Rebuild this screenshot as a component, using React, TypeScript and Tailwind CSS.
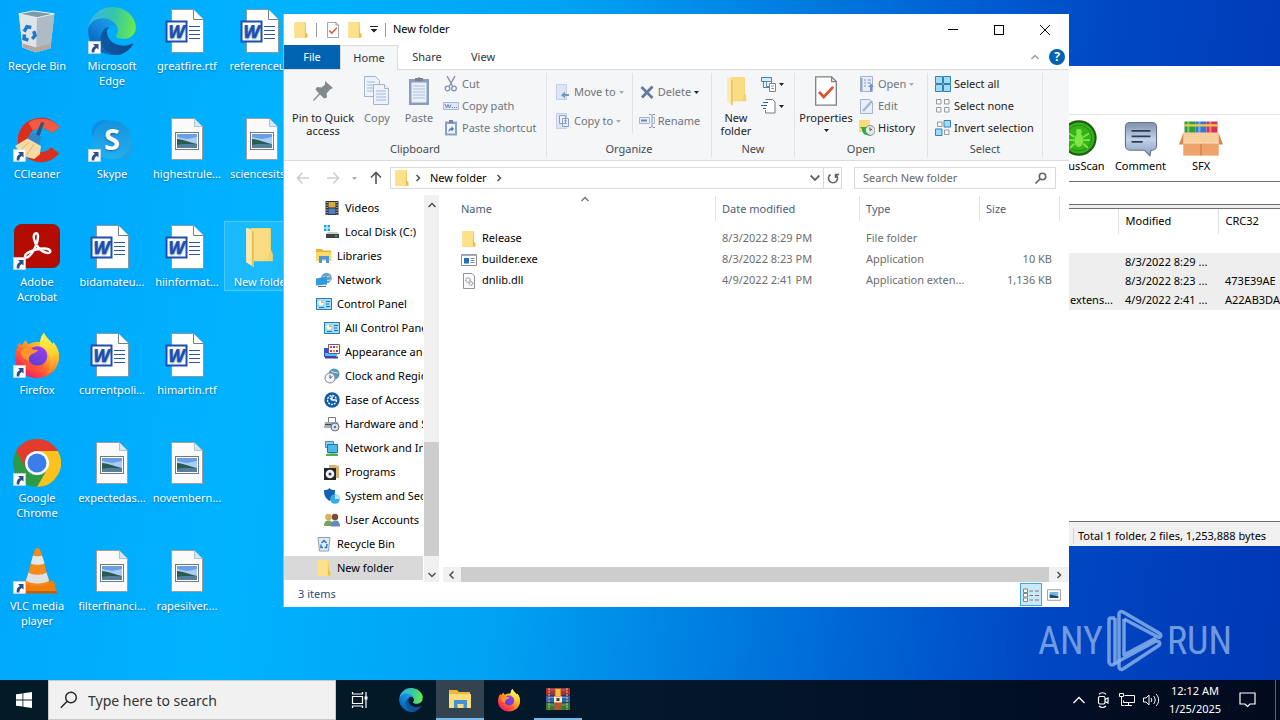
import React from "react";
import type { ReactNode } from "react";

/* ---------- desktop icons ---------- */

const Shortcut = () => (
  <g>
    <rect x="0.5" y="34.500" width="12" height="12" fill="#fff" stroke="#d5dde5" strokeWidth="0.6" />
    <path d="M5 37h5.500v5.500L8.700 40.900C6.800 42 6.200 43.400 6.400 45.500H3.800C3.200 42.400 4.500 40 6.900 38.900z" fill="#2a4f8f" />
  </g>
);

const Art = ({ children }: { children: ReactNode }) => (
  <svg viewBox="0 0 48 48" className="size-12" aria-hidden="true">
    {children}
  </svg>
);

const RecycleBin = () => (
  <Art>
    <g transform="translate(1 2) scale(0.960)">
      <path d="M5 5 20 2l22 3-4 36-15 4-14-5z" fill="#d3dbe2" />
      <path d="M5 5 24 9l-1 36-14-5z" fill="#dfe4e8" />
      <path d="M24 9 42 5l-4 36-15 4z" fill="#aebac4" />
      <path d="M9 36 23 40l15-4-.6 5L23 45 9.500 40z" fill="#b5a79d" />
      <path d="M5 5 20 2l22 3-18 4z" fill="#7d98a9" stroke="#e9f2f7" strokeWidth="1" />
      <g fill="none" stroke="#1a78cf" strokeWidth="3.600">
        <path d="M10.500 23.500 13.500 18.500l4.500.8" />
        <path d="M20.500 23 22 27.500l-3 3.500" />
        <path d="M15 32.500 10.500 31l.3-4.500" />
      </g>
    </g>
  </Art>
);

const edgeShapes = (
  <>
    <defs>
      <linearGradient id="edgeA" x1="60" y1="180" x2="240" y2="180" gradientUnits="userSpaceOnUse">
        <stop stopColor="#0c59a4" />
        <stop offset="1" stopColor="#114a8b" />
      </linearGradient>
      <linearGradient id="edgeB" x1="150" y1="90" x2="40" y2="220" gradientUnits="userSpaceOnUse">
        <stop stopColor="#1b9de2" />
        <stop offset="0.500" stopColor="#1383d8" />
        <stop offset="1" stopColor="#0762b8" />
      </linearGradient>
      <linearGradient id="edgeC" x1="10" y1="60" x2="250" y2="110" gradientUnits="userSpaceOnUse">
        <stop stopColor="#35b6e8" />
        <stop offset="0.500" stopColor="#36c5a8" />
        <stop offset="1" stopColor="#66eb4e" />
      </linearGradient>
    </defs>
    <path fill="url(#edgeA)" d="M235.680 195.460a93.730 93.730 0 0 1-10.540 4.710 101.870 101.870 0 0 1-35.900 6.460c-47.320 0-88.540-32.550-88.540-74.320A31.480 31.480 0 0 1 117.130 105c-42.800 1.800-53.800 46.400-53.800 72.530 0 73.880 68.090 81.370 82.760 81.370 7.910 0 19.840-2.300 27-4.560l1.310-.44a128.340 128.340 0 0 0 66.600-52.800 4 4 0 0 0-5.320-5.640z" />
    <path fill="url(#edgeB)" d="M105.730 241.420A79.200 79.200 0 0 1 83 220.080a80.720 80.720 0 0 1 29.530-120.420C115.660 98.190 121 95.530 128.100 95.660a32.350 32.350 0 0 1 25.680 13 31.880 31.880 0 0 1 6.360 18.660c0-.21 24.460-79.600-80-79.600-43.900 0-80 41.660-80 78.210a130.150 130.150 0 0 0 12.110 56 128 128 0 0 0 156.380 67.110 75.550 75.550 0 0 1-62.780-8z" />
    <path fill="url(#edgeC)" d="M152.330 148.860c-.81 1.050-3.300 2.500-3.300 5.660 0 2.610 1.700 5.120 4.720 7.230 14.380 10 41.490 8.680 41.560 8.680a59.560 59.560 0 0 0 30.270-8.350A61.380 61.380 0 0 0 256 109.190c.26-22.410-8-37.310-11.340-43.910C223.460 23.840 177.720 0 128 0A128 128 0 0 0 0 126.200c.48-36.540 36.800-66.050 80-66.050 3.500 0 23.460.34 42 10.070 16.340 8.580 24.900 18.940 30.850 29.210 6.180 10.670 7.280 24.150 7.280 29.520s-2.740 13.330-7.800 19.910z" />
  </>
);

const EdgeIcon = () => (
  <Art>
    <g transform="scale(0.187)">{edgeShapes}</g>
    <Shortcut />
  </Art>
);

const firefoxShapes = (
  <>
    <defs>
      <linearGradient id="ffA" x1="38" y1="6" x2="8" y2="44" gradientUnits="userSpaceOnUse">
        <stop stopColor="#fff44f" />
        <stop offset="0.350" stopColor="#ffb32a" />
        <stop offset="0.600" stopColor="#ff6a2c" />
        <stop offset="0.850" stopColor="#fb2f55" />
        <stop offset="1" stopColor="#e31587" />
      </linearGradient>
      <linearGradient id="ffB" x1="30" y1="14" x2="18" y2="34" gradientUnits="userSpaceOnUse">
        <stop stopColor="#a33df0" />
        <stop offset="1" stopColor="#5a3fd0" />
      </linearGradient>
      <linearGradient id="ffC" x1="30" y1="2" x2="42" y2="38" gradientUnits="userSpaceOnUse">
        <stop stopColor="#fff65a" />
        <stop offset="0.600" stopColor="#ffd22e" />
        <stop offset="1" stopColor="#ff8b2b" />
      </linearGradient>
    </defs>
    <path fill="url(#ffA)" d="M6.500 11.500c.8 1 1.200 2 1.500 3.200 1.500-1.800 3-3 4.300-5.700 1 1.500 1.800 3.300 3.700 4.300 3.500-2 7-2.600 11-2 .5-4 1.800-7.300 4-9.300C33 7 37 9 39.500 13c.7-.3.8-1 .8-2 4 4.700 6 10 5.700 15.500C45.500 38.500 36 47 24 47S1.800 38 2 25.500C2 20 4 16 6.500 11.500z" />
    <path fill="url(#ffC)" d="M27 11.300c.5-4 1.800-7.300 4-9.300 2 5 6 7 8.500 11 .7-.3.8-1 .8-2 4 4.700 6 10 5.700 15.500C45.700 34 40 41 33 43.500 38 38 39 31 36.500 25c-1.500-4.500-5-7-9.500-8z" />
    <circle cx="24.500" cy="25" r="9.800" fill="url(#ffB)" />
    <path d="M7.500 20c4-3.700 8-3.500 11.500-2 1.700.8 3.300.8 6 1-1 2.800-4.800 3.300-6.800 4.500-2 1.600-2.800 3.800-2.200 6.500-4.500-1.500-8.500-5-8.500-10z" fill="#ff9528" />
    <path d="M12 29c3 7 12 9.500 19 5-3 7.500-16 8.500-21 0z" fill="#ff5138" opacity="0.700" />
  </>
);

const FirefoxIcon = () => (
  <Art>
    {firefoxShapes}
    <Shortcut />
  </Art>
);

const ChromeIcon = () => (
  <Art>
    <circle cx="24" cy="24" r="24" fill="#2c9a48" />
    <path d="M24 24 3.200 12A24 24 0 0 1 44.800 12z" fill="#e33b2e" />
    <path d="M24 12h20.800A24 24 0 0 1 24 48l10.400-18z" fill="#fcc31e" />
    <path d="M3.200 12 13.600 30 24 12z" fill="#e33b2e" />
    <circle cx="24" cy="24" r="12" fill="#fff" />
    <circle cx="24" cy="24" r="9.500" fill="#3b7de9" />
    <Shortcut />
  </Art>
);

const CCleanerIcon = () => (
  <Art>
    <g transform="translate(2 3) scale(0.960 0.930)">
      <path d="M46.500 10A24 24 0 1 0 46 38l-8.500-6.500a13 13 0 1 1 .5-15z" fill="#d8301f" />
      <path d="M46.500 10A24 24 0 0 0 14 5l5 9a13 13 0 0 1 19 2.500z" fill="#ee5a42" />
      <path d="m27.500 4 3 1.500-7 19-4-1.500z" fill="#27577f" />
      <path d="m13 21 6-5 8 4-1 8-6 3z" fill="#2f86c9" />
      <path d="M0 30 13 22l14 8-1 9-6 5-8-2-6-5z" fill="#f7dba5" />
      <path d="m7 33 8-7m-3 14 8-12" stroke="#dcae6a" fill="none" />
    </g>
    <Shortcut />
  </Art>
);

const SkypeIcon = () => (
  <Art>
    <defs>
      <linearGradient id="skype" x1="0" y1="0" x2="0" y2="1">
        <stop stopColor="#1592df" />
        <stop offset="1" stopColor="#23b1ee" />
      </linearGradient>
    </defs>
    <circle cx="16" cy="17" r="12" fill="#0d8fe0" />
    <circle cx="33" cy="33" r="12" fill="#1fa0e8" />
    <circle cx="24" cy="25" r="19.500" fill="url(#skype)" />
    <text x="24" y="35" textAnchor="middle" fill="#fff" fontSize="29" fontWeight="700" fontFamily="Noto Sans, sans-serif">S</text>
    <Shortcut />
  </Art>
);

const AcrobatIcon = () => (
  <Art>
    <rect x="1.500" y="1.500" width="45" height="43" rx="7" fill="#b30b00" stroke="#8b1a12" />
    <path d="M22.500 10.500c3-1.500 3 4 1.500 9-2 6.500-6.500 14-10 15-3.500.8-2.500-3.500 3-5.800 6-2.500 12-3.700 16.500-3 5.500 1 4.500 5 .5 4.200C28 29 22 22 21 16c-.5-3 0-5 1.500-5.500z" fill="none" stroke="#fff" strokeWidth="2.400" />
    <Shortcut />
  </Art>
);

const VlcIcon = () => (
  <Art>
    <path d="M9 34h32l3 12H6z" fill="#f07f0e" />
    <path d="M5.500 44h38l.6 2.500H5z" fill="#c85f04" />
    <path d="M24.500 1c2 0 2.500 1 3 3l9 31c-2 5-22 5-24 0l9-31c.5-2 1-3 3-3z" fill="#f68a1b" />
    <path d="m20 8.500-2.300 8c3 1.800 10.500 1.800 14 0L29 8.500c-2 1-7.500 1-9 0z" fill="#e4e7e9" />
    <path d="m15.500 25.500-2.500 8c4 4 19 4 23 0l-2.500-8c-4 3-14 3-18 0z" fill="#dde1e4" />
    <Shortcut />
  </Art>
);

const WordDoc = () => (
  <Art>
    <path d="M8.500 2.500h22l10 10v33h-32z" fill="#fff" stroke="#8796a8" />
    <path d="M30.500 2.500v10h10" fill="#fff" stroke="#6f7f90" />
    <path d="M26 19.500h11M26 23.500h11M26 27.500h11M26 31.500h11" stroke="#2b56a8" strokeWidth="1.200" />
    <rect x="3.500" y="14.500" width="20" height="20" fill="#fff" stroke="#1f4fae" strokeWidth="2" />
    <text x="13.500" y="31" textAnchor="middle" fill="#1f4fae" fontSize="18" fontWeight="800" fontStyle="italic" fontFamily="Noto Sans, sans-serif">W</text>
  </Art>
);

const PictureDoc = () => (
  <Art>
    <path d="M8.500 3.500h23l8 8v33h-31z" fill="#fbfafa" stroke="#a39d99" />
    <path d="M31.500 3.500v8h8z" fill="#cfe9fa" stroke="#9ab0bd" strokeWidth="0.700" />
    <rect x="12.500" y="17.500" width="23" height="17" fill="#fff" stroke="#6f7a85" />
    <path d="M14 19h20v14H14z" fill="#a9cdf5" />
    <path d="M14 19h20v3L24 24l-10-2z" fill="#6a9fe6" />
    <path d="M14 24c4 0 12 3 20 5v4H14z" fill="#2a5a50" />
    <path d="M14 30c8-2 14 0 20-1v4H14z" fill="#54809b" />
  </Art>
);

const OpenFolder = ({ className }: { className: string }) => (
  <svg viewBox="0 0 32 44" className={className} aria-hidden="true">
    <path d="M8 2h21v23l2 4v8H8z" fill="#f5d36c" />
    <path d="M10 3h18v24l-3 9H10z" fill="#fbdc83" />
    <path d="M3 2c3 0 5 1 8 4v37L3 38z" fill="#fde9ab" />
    <path d="M11 6v37l-2-1.200V5z" fill="#e5bb52" />
  </svg>
);

const BigFolder = () => (
  <span className="flex size-12 items-center pl-[5px]">
    <OpenFolder className="h-[42px] w-[31px]" />
  </span>
);

const desktopItems: { label: string; icon: ReactNode; selected?: boolean }[][] = [
  [
    { label: "Recycle Bin", icon: <RecycleBin /> },
    { label: "CCleaner", icon: <CCleanerIcon /> },
    { label: "Adobe Acrobat", icon: <AcrobatIcon /> },
    { label: "Firefox", icon: <FirefoxIcon /> },
    { label: "Google Chrome", icon: <ChromeIcon /> },
    { label: "VLC media player", icon: <VlcIcon /> },
  ],
  [
    { label: "Microsoft Edge", icon: <EdgeIcon /> },
    { label: "Skype", icon: <SkypeIcon /> },
    { label: "bidamateu...", icon: <WordDoc /> },
    { label: "currentpoli...", icon: <WordDoc /> },
    { label: "expectedas...", icon: <PictureDoc /> },
    { label: "filterfinanci...", icon: <PictureDoc /> },
  ],
  [
    { label: "greatfire.rtf", icon: <WordDoc /> },
    { label: "highestrule...", icon: <PictureDoc /> },
    { label: "hiinformat...", icon: <WordDoc /> },
    { label: "himartin.rtf", icon: <WordDoc /> },
    { label: "novembern...", icon: <PictureDoc /> },
    { label: "rapesilver....", icon: <PictureDoc /> },
  ],
  [
    { label: "referenceu...", icon: <WordDoc /> },
    { label: "sciencesits...", icon: <PictureDoc /> },
    { label: "New folder", icon: <BigFolder />, selected: true },
  ],
];

/* ---------- small icons ---------- */

const Ic = ({ children, className = "size-4" }: { children: ReactNode; className?: string }) => (
  <svg viewBox="0 0 16 16" className={`shrink-0 ${className}`} aria-hidden="true" fill="none">
    {children}
  </svg>
);

const Folder = () => (
  <Ic>
    <path d="M1.500 0H13v11l1.500 1v4h-13z" fill="#f9d772" />
    <path d="M1.500 0h10v16h-10z" fill="#fde08a" />
    <path d="M13 .5V11l1.300 1v3L12 15.500V12z" fill="#e8bd55" />
  </Ic>
);

const CheckDoc = ({ className = "size-4" }: { className?: string }) => (
  <Ic className={className}>
    <path d="M2.500.5h8.500l2.500 2.500v12.500h-11z" fill="#fff" stroke="#7d8288" strokeWidth="0.700" />
    <path d="M11 .5V3h2.500" stroke="#7d8288" strokeWidth="0.700" />
    <path d="m4.300 8.500 2.500 2.700 5-5.400" stroke="#e0532f" strokeWidth="1.500" />
  </Ic>
);

const Down = ({ muted = false }: { muted?: boolean }) => (
  <svg viewBox="0 0 5 3" className={muted ? "h-[3px] w-[5px] shrink-0 fill-[#a9adb3]" : "h-[3px] w-[5px] shrink-0 fill-[#222]"} aria-hidden="true">
    <path d="M0 0h5L2.500 3z" />
  </svg>
);

const Monitor = () => (
  <Ic>
    <rect x="0.500" y="2.500" width="15" height="11" fill="#9fdcf7" stroke="#2b7fb5" />
    <circle cx="5" cy="7" r="2.500" fill="#fff" />
    <path d="M5 7V4.500A2.500 2.500 0 0 1 7.500 7z" fill="#f2b72f" />
    <path d="M3 11.500h5M10 5.500h4M10 8h3M10 10.500h4" stroke="#1f6fb2" />
  </Ic>
);

const treeItems: { label: string; level: 1 | 2; icon: ReactNode; selected?: boolean }[] = [
  {
    label: "Videos", level: 2, icon: (
      <Ic><path d="M1.500 1h13v14h-13z" fill="#313338" /><path d="M4.500 2h7v5.500h-7z" fill="#d9a83f" /><path d="M4.500 8.500h7V14h-7z" fill="#4a81c9" /><path d="M3 2v13M13 2v13" stroke="#fff" strokeWidth="1" strokeDasharray="1 1.500" /></Ic>
    ),
  },
  {
    label: "Local Disk (C:)", level: 2, icon: (
      <Ic><path d="M0 1h2.500v2.500H0zM3.500 1H6v2.500H3.500zM0 4.500h2.500V7H0zM3.500 4.500H6V7H3.500z" fill="#19a7e8" /><path d="M2 10 4 8h9l2 2z" fill="#c7cbd0" /><path d="M2 10h13v4H2z" fill="#3d4249" /><path d="M11 12h2" stroke="#51e36b" strokeWidth="1.200" /></Ic>
    ),
  },
  {
    label: "Libraries", level: 1, icon: (
      <Ic><path d="M0 1h6l1 1.500h8V13H0z" fill="#e9b13a" /><path d="M0 4h15.500v9H0z" fill="#fcd968" /><path d="M3 15V8h10v7h-3v-3.500H6V15z" fill="#4a96d8" /></Ic>
    ),
  },
  {
    label: "Network", level: 1, icon: (
      <Ic><circle cx="10.500" cy="6" r="5.300" fill="#6f9fbf" /><path d="M7 4c2 2 4 1 7 0M6 8c3 1 5 1 9 0" stroke="#cfe3ee" /><path d="M0 6.500 11 4.500v8L0 13.500z" fill="#2d9bdd" /><path d="M2 14.500h8" stroke="#5c6c78" /></Ic>
    ),
  },
  { label: "Control Panel", level: 1, icon: <Monitor /> },
  { label: "All Control Panel Items", level: 2, icon: <Monitor /> },
  {
    label: "Appearance and Personalization", level: 2, icon: (
      <Ic><path d="M0 4h12v9H0z" fill="#2c56c9" /><path d="M1 9h12v3H1z" fill="#47c0f2" /><path d="M4.500.5h11v9h-11z" fill="#fff" stroke="#73508c" /><path d="M6 2h2v2H6zM6 6h2v2H6z" fill="#e33" /><path d="M9 2h2v2H9zM12 6h2v2h-2z" fill="#7b36c9" /><path d="M12 2h2v2h-2zM9 6h2v2H9z" fill="#e89a1d" /><path d="M1 13.500h13" stroke="#5236a8" strokeWidth="2" /></Ic>
    ),
  },
  {
    label: "Clock and Region", level: 2, icon: (
      <Ic><circle cx="10" cy="6" r="5.500" fill="#5a96b8" /><path d="M7 3c2 2 5 1 7 2" stroke="#d7edf5" /><circle cx="6" cy="10" r="5" fill="#f3f5f7" stroke="#84898f" /><path d="M6 7v3.300l2.500-2" stroke="#555" /></Ic>
    ),
  },
  {
    label: "Ease of Access", level: 2, icon: (
      <Ic><circle cx="8" cy="8" r="7.700" fill="#0f5ea8" /><circle cx="8" cy="8" r="4.500" stroke="#fff" strokeWidth="1.300" strokeDasharray="2 1" /><path d="M8 4v4h4M6 6l2 2" stroke="#fff" strokeWidth="1.300" /></Ic>
    ),
  },
  {
    label: "Hardware and Sound", level: 2, icon: (
      <Ic><path d="M4.500 1.500h7v5h-7z" fill="#fff" stroke="#777" /><path d="M1 6h13l1 6H0z" fill="#a5adb4" /><path d="M1 8.500h7" stroke="#3e474f" /><circle cx="11" cy="11" r="4" fill="#d8e3ee" stroke="#65717c" /><circle cx="11" cy="11" r="1.200" fill="#4b7ba8" /></Ic>
    ),
  },
  {
    label: "Network and Internet", level: 2, icon: (
      <Ic><path d="M1.500 1.500h8v6h-8z" fill="#8fd0f0" stroke="#3d94c4" /><path d="M3.500 4.500h10v8h-10z" fill="#4db7f0" stroke="#1e75ab" /><path d="M2 14c4-1 9-1 12 0v2H2z" fill="#4fae4d" /></Ic>
    ),
  },
  {
    label: "Programs", level: 2, icon: (
      <Ic><path d="M5 1h6l4 1v12H5z" fill="#dab568" /><path d="M0 4h12v12H0z" fill="#24272b" /><circle cx="6" cy="10" r="4.300" fill="#f0f3f6" /><circle cx="6" cy="10" r="1.500" fill="#33383d" /></Ic>
    ),
  },
  {
    label: "System and Security", level: 2, icon: (
      <Ic><path d="M0 2c2 0 4 0 5.500-2C7 2 9 2 11 2c0 6-1 8-5.500 11C1 10 0 7 0 2z" fill="#1560b3" /><circle cx="11" cy="11" r="4.800" fill="#35aee8" /><path d="M11 11V6.200a4.800 4.800 0 0 1 4.700 4.800z" fill="#bde6f8" /></Ic>
    ),
  },
  {
    label: "User Accounts", level: 2, icon: (
      <Ic><circle cx="4.500" cy="5" r="3.300" fill="#d8b25c" /><path d="M0 14c0-4 2-5.500 4.500-5.500S9 10 9 14z" fill="#76a45a" /><circle cx="11" cy="5" r="3.200" fill="#7a4c35" /><path d="M7 14.500C7 10 9 8.500 11.500 8.500S16 10 16 14.500z" fill="#6489bd" /></Ic>
    ),
  },
  {
    label: "Recycle Bin", level: 1, icon: (
      <Ic><path d="m2 1.500 12 0-1.500 13.500h-9z" fill="#e4ebf0" stroke="#8f9fab" /><path d="m5.500 7 2.500-2.500L10.500 7M11 8l-.5 3.500H8.500M7 11.500H5L5 8.500" stroke="#2379c8" strokeWidth="1.500" /></Ic>
    ),
  },
  { label: "New folder", level: 1, icon: <Folder />, selected: true },
];

/* ---------- ribbon ---------- */

const Group = ({ label, children, className, pad = "pl-1" }: { label: string; children: ReactNode; className: string; pad?: string }) => (
  <section className={`my-[3px] flex shrink-0 flex-col border-r border-[#dfe2e6] ${className}`}>
    <div className={`flex h-[75px] items-start ${pad}`}>{children}</div>
    <div className="text-center leading-4 text-[#444a52]">{label}</div>
  </section>
);

const Big = ({ icon, label, className, muted = false }: { icon: ReactNode; label: ReactNode; className: string; muted?: boolean }) => (
  <button type="button" className={`flex flex-col items-center pt-[2px] leading-[13px] ${muted ? "text-[#6e747c]" : "text-[#222]"} ${className}`}>
    <span className="mb-1 flex h-8 items-center">{icon}</span>
    {label}
  </button>
);

const Small = ({ icon, label, muted = false, drop }: { icon: ReactNode; label: string; muted?: boolean; drop?: ReactNode }) => (
  <button type="button" className={`flex h-[22px] items-center gap-[3px] whitespace-nowrap ${muted ? "text-[#6e747c]" : "text-[#222]"}`}>
    {icon}
    <span>{label}</span>
    {drop}
  </button>
);

const Ribbon = () => (
  <div className="flex h-[92px] border-y border-[#dadbdc] bg-[#f5f6f7]">
    <Group label="Clipboard" className="w-[263px]" pad="pl-[3px]">
      <Big
        className="w-[72px]"
        label={<>Pin to Quick<br />access</>}
        icon={
          <svg viewBox="0 0 24 24" className="size-6" aria-hidden="true">
            <path d="m14 2 8 7-3 1.500-3.500 4 .5 4-3 1-4-4L3 22l-1-1 6-6.500-3.500-4L6 8l4.500.5 3.500-3z" fill="#828a8d" />
          </svg>
        }
      />
      <Big
        muted
        className="w-9"
        label="Copy"
        icon={
          <svg viewBox="0 0 28 30" className="h-[30px] w-7" aria-hidden="true" fill="#eef3fb" stroke="#a2b4d3">
            <path d="M1.500.5h11l4 4v16h-15z" />
            <path d="M4 6h8M4 9h9M4 12h9M4 15h9" />
            <path d="M10.500 8.500h11l4 4v16h-15z" />
            <path d="M21.500 8.500v4h4M13 15h10M13 18h10M13 21h10M13 24h10" />
          </svg>
        }
      />
      <Big
        muted
        className="ml-1 w-10"
        label="Paste"
        icon={
          <svg viewBox="0 0 22 30" className="h-[30px] w-[22px]" aria-hidden="true">
            <path d="M1 3h20v26H1z" fill="#8a9dbe" />
            <path d="M3.500 6.500h15v20h-15z" fill="#e9f0fa" />
            <path d="M5 10h12M5 13h12M5 16h12M5 19h12M5 22h12" stroke="#aebfda" />
            <path d="M7 5V2h2.500a2 2 0 0 1 3 0H15v3z" fill="#7a828d" />
          </svg>
        }
      />
      <div className="ml-1 flex flex-col">
        <Small muted label="Cut" icon={<Ic><path d="m4 0 5.500 10M12 0 6.500 10" stroke="#8d97a7" strokeWidth="1.500" /><circle cx="4.500" cy="12.500" r="2.300" stroke="#7f93b8" strokeWidth="1.300" /><circle cx="11" cy="12.500" r="2.300" stroke="#7f93b8" strokeWidth="1.300" /></Ic>} />
        <Small muted label="Copy path" icon={<Ic><path d="M.5 4.500h15v7H.5z" fill="#dfe8f6" stroke="#a9b9d5" /><path d="m2 6 1.500 4L5 6.500 6.500 10 8 6.500M9 9.500h1M11 9.500h1M13 9.500h1" stroke="#6c84b1" /></Ic>} />
        <Small muted label="Paste shortcut" icon={<Ic><path d="M2 1.500h12v14H2z" fill="#8ca2c8" /><path d="M4 4h8v9.500H4z" fill="#edf3fb" /><path d="M6 0h4v3H6z" fill="#7a8494" /><path d="M5.500 12c0-3 1.500-4 3-4V6l2.500 3-2.500 2.500V10c-1.200 0-1.500.8-3 2z" fill="#5379b6" /></Ic>} />
      </div>
    </Group>
    <Group label="Organize" className="w-[165px]" pad="pl-2">
      <div className="flex flex-col gap-[7px] pt-2">
        <Small muted label="Move to" drop={<Down muted />} icon={<Ic><path d="M1.500.5h10v15h-10z" fill="#dbe5f4" stroke="#c3d0e5" /><path d="M14 10h-4V7.500L6 11l4 3.500V12h4z" fill="#7b93bf" /></Ic>} />
        <Small muted label="Copy to" drop={<Down muted />} icon={<Ic><path d="M1.500.5h10v15h-10z" fill="#dbe5f4" stroke="#c3d0e5" /><path d="M4.500 2.500h6v8h-6zM7.500 5.500h6v8h-6z" fill="#eef3fb" stroke="#8ca0c6" /><path d="M9 8h3M9 10.500h3" stroke="#8ca0c6" /></Ic>} />
      </div>
      <div className="ml-2 flex h-[60px] flex-col gap-[7px] border-l border-[#dfe2e6] pt-2 pl-[6px]">
        <Small muted label="Delete" drop={<Down />} icon={<Ic><path d="m2.500 3 11 11M13.500 2.500 3 13.500" stroke="#667b9d" strokeWidth="2.800" /></Ic>} />
        <Small muted label="Rename" icon={<Ic><path d="M.5 4.500h10v6H.5z" fill="#e7eef9" stroke="#a6b5d0" /><path d="M2 6.500h6v2H2z" fill="#6687bd" /><path d="M10 1.500h2l1 1 1-1h2M10 14.500h2l1-1 1 1h2M13 2v12" stroke="#7b93bf" /><path d="M14 4.500h1.500v6H14" stroke="#a6b5d0" /></Ic>} />
      </div>
    </Group>
    <Group label="New" className="w-[83px]">
      <Big className="w-10" label={<>New<br />folder</>} icon={<OpenFolder className="h-[30px] w-[22px]" />} />
      <div className="ml-[5px] flex flex-col">
        <button type="button" aria-label="New item" className="flex h-[22px] items-center gap-[2px]">
          <Ic><path d="M.5 1.500h10v4H.5z" fill="#d8ecf8" stroke="#3884b0" /><path d="M2.500 5.500v6h6" stroke="#3884b0" /><path d="M5.500 5.500h5v5h-5z" fill="#e8f3fa" stroke="#6f8796" /><path d="M8.500 7.500h6v8h-6z" fill="#fff" stroke="#808489" /><path d="M10 10h3M10 12.500h3" stroke="#999" /></Ic>
          <Down />
        </button>
        <button type="button" aria-label="Easy access" className="flex h-[22px] items-center gap-[2px]">
          <Ic><path d="M3.500 1.500h8l2.500 2.500v11.500H3.500z" fill="#fff" /><path d="M4.500 1.500h7l2.500 2.500v11h-9.500v-3" stroke="#74797e" /><path d="M2 4.500h5M0 7.500h6M2 10.500h3" stroke="#2c6696" /></Ic>
          <Down />
        </button>
      </div>
    </Group>
    <Group label="Open" className="w-[133px]">
      <Big className="w-[54px]" label={<>Properties<span className="mt-[5px]"><Down /></span></>} icon={<CheckDoc className="size-[30px]" />} />
      <div className="ml-[6px] flex flex-col">
        <Small muted label="Open" drop={<Down muted />} icon={<Ic><path d="M1.500.5h12v15h-12z" fill="#e9effa" stroke="#a3b4d2" /><path d="M1.500 2h2v13h-2z" fill="#8fa3c9" /><path d="M5 4h2M8.500 4H12M5 7h2M8.500 7H12M5 10h2" stroke="#7b93bf" /><path d="M11 15.500V11H9l3-3.500 3 3.500h-2v4.500z" fill="#7b93bf" /></Ic>} />
        <Small muted label="Edit" icon={<Ic><path d="M1.500 1.500h9l3 3v11h-12z" fill="#e9effa" stroke="#a3b4d2" /><path d="m4 13 9-10" stroke="#a9b7ce" strokeWidth="2.500" /></Ic>} />
        <Small label="History" icon={<Ic><path d="M0 0h11v12H0z" fill="#fbdb75" /><circle cx="11" cy="10.500" r="5" fill="#e3e6e8" stroke="#8a9095" /><path d="M11 7.500v3l2-1.500" stroke="#555" /><path d="M1 7h7L6.500 9c0 3 1.500 5 4.500 6-5 1-8-2-8-6z" fill="#2eaa43" /></Ic>} />
      </div>
    </Group>
    <Group label="Select" className="w-[115px]" pad="pl-[7px]">
      <div className="flex flex-col">
        <Small label="Select all" icon={<Ic><path d="M.5.5h7v7H.5zM8.500.5h7v7h-7zM.5 8.500h7v7H.5zM8.500 8.500h7v7h-7z" fill="#a7d8f5" stroke="#2b86b8" /></Ic>} />
        <Small label="Select none" icon={<Ic><path d="M1.500 1.500h4.500v4.500H1.500zM9.500 1.500H14v4.500H9.500zM1.500 9.500h4.500V14H1.500zM9.500 9.500H14V14H9.500z" stroke="#9b9b9b" /></Ic>} />
        <Small label="Invert selection" icon={<Ic><path d="M2.500 2h4.500v4.500H2.500zM9.500 10H14v4.500H9.500z" stroke="#9b9b9b" /><path d="M9 .5h6.500v6.500H9zM.5 9h6.500v6.500H.5z" fill="#a7d8f5" stroke="#2b86b8" /></Ic>} />
      </div>
    </Group>
  </div>
);

/* ---------- explorer ---------- */

const Chevron = ({ d, className = "size-2 stroke-[#505050]" }: { d: string; className?: string }) => (
  <svg viewBox="0 0 8 8" className={`shrink-0 fill-none ${className}`} strokeWidth="1.500" aria-hidden="true">
    <path d={d} />
  </svg>
);
const UP = "M.5 6 4 2.500 7.500 6";
const DOWN = "M.5 2 4 5.500 7.500 2";
const RIGHT = "M2.500 1 5.500 4 2.500 7";
const LEFT = "M5.500.5 2 4l3.500 3.500";

const Arrow = ({ d, className }: { d: string; className: string }) => (
  <svg viewBox="0 0 14 14" className={`size-[14px] fill-none ${className}`} strokeWidth="1.600" aria-hidden="true">
    <path d={d} />
  </svg>
);

const files: { name: string; date: string; type: string; size: string; icon: ReactNode }[] = [
  { name: "Release", date: "8/3/2022 8:29 PM", type: "File folder", size: "", icon: <Folder /> },
  {
    name: "builder.exe", date: "8/3/2022 8:23 PM", type: "Application", size: "10 KB",
    icon: <Ic><path d="M.5 2.500h15v11H.5z" fill="#fff" stroke="#868d94" /><path d="M.5 2.500h15V4H.5z" fill="#a8b0b7" /><path d="M3 6h5v5.500H3z" fill="#1f70bd" /><path d="M9.500 6.500h4M9.500 8.500h4M9.500 10.500h4" stroke="#7d8790" /></Ic>,
  },
  {
    name: "dnlib.dll", date: "4/9/2022 2:41 PM", type: "Application exten...", size: "1,136 KB",
    icon: <Ic><path d="M2.500.5h8.500l2.500 2.500v12.500h-11z" fill="#fbfbfb" stroke="#8f959a" /><circle cx="7" cy="7" r="2.200" stroke="#8d949b" strokeWidth="1.300" strokeDasharray="1.200 .5" /><circle cx="10" cy="10.500" r="1.800" stroke="#8d949b" strokeWidth="1.200" strokeDasharray="1 .5" /></Ic>,
  },
];

const Explorer = () => (
  <section className="absolute top-[14px] left-[283px] flex h-[593px] w-[786px] flex-col border-l border-[#5fcdf7] bg-white text-[11px]">
    <header className="flex h-[31px] shrink-0 items-center pr-px">
      <div className="flex flex-1 items-center pl-[9px]">
        <Folder />
        <span className="mx-[7px] h-[14px] w-px bg-[#9a9a9a]" />
        <span className="ml-px"><CheckDoc /></span>
        <span className="ml-[6px]"><Folder /></span>
        <svg viewBox="0 0 8 7" className="ml-[7px] h-[7px] w-2" aria-hidden="true"><path d="M0 0h8v1H0zM.5 3h7L4 6.500z" fill="#222" /></svg>
        <span className="mx-[7px] h-[14px] w-px bg-[#9a9a9a]" />
        <h1 className="text-black">New folder</h1>
      </div>
      <button type="button" aria-label="Minimize" className="flex h-full w-[46px] items-center justify-center"><span className="h-px w-[10px] bg-black" /></button>
      <button type="button" aria-label="Maximize" className="flex h-full w-[46px] items-center justify-center"><span className="size-[10px] border border-black" /></button>
      <button type="button" aria-label="Close" className="flex h-full w-[46px] items-center justify-center">
        <svg viewBox="0 0 10 10" className="size-[10px] stroke-black" aria-hidden="true"><path d="m0 0 10 10M10 0 0 10" /></svg>
      </button>
    </header>

    <nav className="relative z-10 -mb-px flex h-[25px] shrink-0 text-[#333]">
      <button type="button" className="mb-px w-14 bg-[#0063b1] text-white">File</button>
      <button type="button" className="w-[58px] border-x border-t border-[#dadbdc] bg-[#f5f6f7]">Home</button>
      <button type="button" className="w-[58px]">Share</button>
      <button type="button" className="w-[54px]">View</button>
      <div className="ml-auto flex items-center gap-[10px] pr-1 pb-px">
        <Chevron d={UP} className="size-2 stroke-[#9a9a9a]" />
        <button type="button" aria-label="Help" className="flex size-4 items-center justify-center rounded-full bg-[#0063b1] text-[12px] leading-4 font-bold text-white">?</button>
      </div>
    </nav>

    <Ribbon />

    <div className="flex h-[34px] shrink-0 items-center pr-[13px]">
      <div className="flex items-center pr-[3px] pl-3">
        <Arrow d="M6.500 1.500 1.500 7l5 5.500M1.500 7H13" className="stroke-[#cfcfcf]" />
        <span className="ml-4"><Arrow d="M7.500 1.500l5 5.500-5 5.500M12.500 7H1" className="stroke-[#cfcfcf]" /></span>
        <span className="mx-3"><Down muted /></span>
        <Arrow d="M2 6.500l5-5 5 5M7 1.500V13" className="stroke-[#555]" />
      </div>
      <div className="ml-1 flex h-[22px] flex-1 items-center border border-[#d9d9d9] pl-[3px]">
        <Folder />
        <span className="mr-2 ml-1"><Chevron d={RIGHT} /></span>
        <span className="text-black">New folder</span>
        <span className="ml-2"><Chevron d={RIGHT} /></span>
        <span className="mr-[3px] ml-auto"><Chevron d={DOWN} className="size-[10px] stroke-[#666]" /></span>
        <button type="button" aria-label="Refresh" className="flex h-full w-[18px] items-center justify-center border-l border-[#d9d9d9]">
          <svg viewBox="0 0 12 12" className="size-3 fill-none stroke-[#666]" strokeWidth="1.600" aria-hidden="true"><path d="M8.500 2.500A4.500 4.500 0 1 1 3.500 2.500M8.500 6V2.500H12" /></svg>
        </button>
      </div>
      <label className="ml-3 flex h-[22px] w-[202px] items-center border border-[#d9d9d9] px-2">
        <input type="text" aria-label="Search New folder" placeholder="Search New folder" className="min-w-0 flex-1 bg-transparent outline-none placeholder:text-[#666]" />
        <svg viewBox="0 0 12 12" className="size-3 fill-none stroke-[#666]" strokeWidth="1.600" aria-hidden="true"><circle cx="7.500" cy="4.500" r="3.200" /><path d="M5 7 .5 11.500" /></svg>
      </label>
    </div>

    <div className="flex min-h-0 flex-1">
      <aside className="flex w-[139px] shrink-0 flex-col overflow-hidden pt-px text-black">
        {treeItems.map((t) => (
          <div key={t.label} className={`flex h-6 shrink-0 items-center gap-[5px] whitespace-nowrap ${t.level === 1 ? "pl-8" : "pl-10"} ${t.selected ? "bg-[#d9d9d9]" : ""}`}>
            {t.icon}
            <span>{t.label}</span>
          </div>
        ))}
      </aside>
      <div className="ml-px flex w-[15px] shrink-0 flex-col items-center bg-[#f0f0f0]">
        <div className="flex h-5 items-center"><Chevron d={UP} /></div>
        <div className="mt-auto h-[114px] w-full bg-[#cdcdcd]" />
        <div className="mb-1 flex h-[22px] items-center pt-4"><Chevron d={DOWN} /></div>
      </div>
      <div className="ml-1 flex min-w-0 flex-1 flex-col">
        <table className="w-[617px] table-fixed text-left text-[#6d6d6d]">
          <colgroup>
            <col className="w-[273px]" />
            <col className="w-36" />
            <col className="w-[120px]" />
            <col className="w-20" />
          </colgroup>
          <thead>
            <tr className="h-[33px] text-[#4c607a]">
              <th className="relative p-0 font-normal">
                <span className="absolute top-0 left-[138px]"><Chevron d={UP} className="size-2 stroke-[#777]" /></span>
                <div className="mb-[6px] h-[25px] border-r border-[#e2e2e2] pl-[18px] leading-[25px]">Name</div>
              </th>
              {["Date modified", "Type", "Size"].map((h) => (
                <th key={h} className="p-0 font-normal"><div className="mb-[6px] h-[25px] border-r border-[#e2e2e2] pl-[6px] leading-[25px]">{h}</div></th>
              ))}
            </tr>
          </thead>
          <tbody>
            {files.map((f) => (
              <tr key={f.name} className="h-[21px]">
                <td className="p-0 pl-[18px]"><div className="flex items-center gap-[5px] text-black">{f.icon}{f.name}</div></td>
                <td className="p-0 pl-[6px]">{f.date}</td>
                <td className="p-0 pl-[6px] whitespace-nowrap">{f.type}</td>
                <td className="p-0 pr-2 text-right">{f.size}</td>
              </tr>
            ))}
          </tbody>
        </table>
        <div className="mt-auto flex h-[15px] items-center bg-[#f0f0f0]">
          <span className="flex w-[18px] justify-center"><Chevron d={LEFT} /></span>
          <div className="h-full flex-1 bg-[#cdcdcd]" />
          <span className="flex w-5 justify-center"><Chevron d={RIGHT} /></span>
        </div>
      </div>
    </div>

    <footer className="flex h-[25px] shrink-0 items-center pr-1 pl-[14px] text-[#2b4a7a]">
      <span className="flex-1">3 items</span>
      <button type="button" aria-label="Details view" className="flex h-[23px] w-[22px] items-center justify-center border border-[#3fa9dd] bg-[#cbe8f6]">
        <Ic><path d="M.5 2h4v3.500h-4zM.5 6.500h4V10h-4zM.5 11h4v3.500h-4z" fill="#fff" stroke="#828282" /><path d="M6.500 4H10M12 4h4M6.500 8.500H10M12 8.500h4M6.500 13H10M12 13h4" stroke="#777" /></Ic>
      </button>
      <button type="button" aria-label="Large icons view" className="flex w-[23px] items-center justify-center">
        <Ic className="size-[14px]"><path d="M.5 2h15v12H.5z" fill="#fff" stroke="#909090" /><path d="M3 4.500h10v4H3z" fill="#77b5ee" /><path d="M3 7.500l10 1.500v2.500H3z" fill="#234f63" /></Ic>
      </button>
    </footer>
  </section>
);

/* ---------- archive window ---------- */

const archiveRows = [
  { type: "", modified: "", crc: "" },
  { type: "", modified: "8/3/2022 8:29 ...", crc: "" },
  { type: "", modified: "8/3/2022 8:23 ...", crc: "473E39AE" },
  { type: "extens...", modified: "4/9/2022 2:41 ...", crc: "A22AB3DA" },
];

const Archive = () => (
  <section className="absolute top-[66px] right-0 left-[1000px] flex h-[480px] flex-col overflow-hidden bg-white text-[11px] text-black">
    <div className="h-[49px] shrink-0 border-b border-[#e4e4e4]" />
    <div className="flex h-[67px] shrink-0 border-b border-[#707070] pt-[3px] pl-[49px]">
      <button type="button" className="flex w-[61px] flex-col items-center">
        <svg viewBox="0 0 36 36" className="size-10" aria-hidden="true">
          <circle cx="17" cy="18" r="16" fill="#1c5c14" />
          <circle cx="17" cy="18" r="14" fill="#35b31b" />
          <circle cx="17" cy="18" r="11.500" fill="none" stroke="#2c8f15" />
          <ellipse cx="17" cy="20" rx="4" ry="6" fill="#7be845" />
          <circle cx="17" cy="12.500" r="2.500" fill="#7be845" />
          <path d="m13 17-5-3M13 20H7m6 3-4 4m12-10 5-3m-5 6h6m-6 3 4 4" stroke="#7be845" strokeWidth="1.600" />
        </svg>
        <span className="leading-4">VirusScan</span>
      </button>
      <button type="button" className="flex w-[61px] flex-col items-center">
        <svg viewBox="0 0 36 36" className="size-10" aria-hidden="true">
          <defs><linearGradient id="note" x1="0" y1="0" x2="0" y2="1"><stop stopColor="#7f90ad" /><stop offset="0.500" stopColor="#c3d1e8" /><stop offset="1" stopColor="#8d9fbd" /></linearGradient></defs>
          <path d="M8 4h20a4 4 0 0 1 4 4v17a4 4 0 0 1-4 4h-1l-1 5-5-5H8a4 4 0 0 1-4-4V8a4 4 0 0 1 4-4z" fill="url(#note)" stroke="#66748d" />
          <path d="M9.500 11.500h17M9.500 16.500h17M9.500 21.500h10" stroke="#2e3c55" strokeWidth="1.600" />
        </svg>
        <span className="leading-4">Comment</span>
      </button>
      <button type="button" className="flex w-[60px] flex-col items-center">
        <svg viewBox="0 0 40 36" className="h-10 w-[44px]" aria-hidden="true">
          <path d="M5 3h10v12H5z" fill="#2f9e3c" /><path d="M15 3h10v12H15z" fill="#3678d8" /><path d="M25 3h10v12H25z" fill="#d63352" />
          <path d="M7.500 3h2v12h-2zM17.500 3h2v12h-2zM27.500 3h2v12h-2z" fill="#fff" opacity="0.350" />
          <path d="M5 6.500h10M15 6.500h10M25 6.500h10" stroke="#f4ca43" strokeWidth="2" />
          <path d="M4 13h32v21H4z" fill="#f8cf9c" /><path d="M4 13 0 24h4zM36 13l4 11h-4z" fill="#d28a50" /><path d="M4 22.500h32V34H4z" fill="#eda36b" /><path d="M20 23v11" stroke="#c97b43" /><path d="M4 22.500h32" stroke="#fbe3c4" />
        </svg>
        <span className="leading-4">SFX</span>
      </button>
    </div>
    <div className="h-[22px] shrink-0" />
    <div className="h-[5px] shrink-0 border-y border-[#707070] bg-[#eee]" />
    <div className="flex-1">
      <table className="w-[318px] table-fixed text-left">
        <colgroup>
          <col className="w-[118px]" />
          <col className="w-[100px]" />
          <col className="w-[100px]" />
        </colgroup>
        <thead>
          <tr className="h-[25px]">
            <th aria-label="Type" className="border-r border-[#e0e0e0] p-0 font-normal" />
            <th className="border-r border-[#e0e0e0] p-0 pl-[7px] font-normal">Modified</th>
            <th className="p-0 pl-[7px] font-normal">CRC32</th>
          </tr>
        </thead>
        <tbody>
          {archiveRows.map((r, i) => (
            <tr key={i} className={i > 0 ? "h-[19px] bg-[#eeeeee]" : "h-[19px]"}>
              <td className="p-0 pr-[5px] text-right whitespace-nowrap">{r.type}</td>
              <td className="p-0 pl-[7px] whitespace-nowrap">{r.modified}</td>
              <td className="p-0 pl-[7px]">{r.crc}</td>
            </tr>
          ))}
        </tbody>
      </table>
    </div>
    <footer className="flex h-[25px] shrink-0 items-center border-t border-[#707070] bg-[#f0f0f0] pt-1 pl-[73px]">
      <span className="h-4 w-px bg-[#d5d5d5]" />
      <span className="pl-1 whitespace-nowrap">Total 1 folder, 2 files, 1,253,888 bytes</span>
    </footer>
  </section>
);

/* ---------- taskbar ---------- */

const Taskbar = () => (
  <footer className="flex h-10 shrink-0 items-stretch bg-linear-to-r from-[#021b26] via-[#03182a] to-[#020a1e] text-white">
    <button type="button" aria-label="Start" className="flex w-12 items-center justify-center">
      <svg viewBox="0 0 16 16" className="size-4 fill-white" aria-hidden="true"><path d="m0 2.300 6.500-.9v6.100H0zM7.300 1.300 16 0v7.500H7.300zM0 8.400h6.500v6.200L0 13.700zM7.300 8.400H16V16l-8.700-1.200z" /></svg>
    </button>
    <label className="flex w-72 items-center border border-[#c8c8c8] bg-[#f1f1f1] pl-[11px]">
      <svg viewBox="0 0 18 18" className="size-[18px] fill-none stroke-[#222]" strokeWidth="1.400" aria-hidden="true"><circle cx="11" cy="6.500" r="5.300" /><path d="M7 10.500.8 16.800" /></svg>
      <input type="text" aria-label="Type here to search" placeholder="Type here to search" className="ml-[10px] min-w-0 flex-1 bg-transparent text-[14px] outline-none placeholder:text-[#333]" />
    </label>
    <button type="button" aria-label="Task view" className="flex w-12 items-center justify-center">
      <svg viewBox="0 0 18 16" className="h-4 w-[18px] fill-none stroke-white" strokeWidth="1.200" aria-hidden="true"><path d="M1.500 4.500h10v7h-10zM1.500 0v2h10V0M1.500 16v-2h10v2M15 0v16" /><path d="M13.500 4.500h3v3h-3z" fill="#fff" stroke="none" /></svg>
    </button>
    <button type="button" aria-label="Microsoft Edge" className="flex w-[52px] items-center justify-center pl-[2px]">
      <svg viewBox="0 0 256 260" className="size-6" aria-hidden="true">{edgeShapes}</svg>
    </button>
    <button type="button" aria-label="File Explorer" className="flex w-12 items-center justify-center border-b-2 border-[#76b9ed] bg-[#33434f]">
      <svg viewBox="0 0 22 20" className="h-5 w-[22px]" aria-hidden="true"><path d="M0 1h8l2 2h11v16H0z" fill="#f0b63c" /><path d="M0 5h22v14H0z" fill="#fddc7a" /><path d="M5 19v-8h13v8h-3.500v-4h-6v4z" fill="#4592cf" /></svg>
    </button>
    <button type="button" aria-label="Firefox" className="flex w-[50px] items-center justify-center">
      <svg viewBox="0 0 48 48" className="size-6" aria-hidden="true">{firefoxShapes}</svg>
    </button>
    <button type="button" aria-label="WinRAR" className="flex w-12 items-center justify-center border-b-2 border-[#76b9ed]">
      <svg viewBox="0 0 24 24" className="size-6" aria-hidden="true">
        <path d="M0 1h24v7H0z" fill="#a92a3c" /><path d="M0 8.500h24v7H0z" fill="#3060b8" /><path d="M0 16h24v7H0z" fill="#2b7d3c" />
        <path d="M2 3h20M2 10.500h20M2 18h20" stroke="#c9b9cc" strokeWidth="0.500" />
        <path d="M3 1v22M21 1v22" stroke="#e0b13c" strokeWidth="1.200" strokeDasharray="2 1" />
        <path d="M8.500 1h7v22h-7z" fill="#b5572a" /><path d="M9.500 2h5v7h-5z" fill="#f3c23c" /><path d="M8 9.500h8v6H8z" fill="#f4e9c8" /><path d="M10.500 11h3v3h-3z" fill="#5b3a1e" />
      </svg>
    </button>
    <div className="ml-auto flex items-stretch pr-1">
      <button type="button" aria-label="Show hidden icons" className="flex w-6 items-center justify-center">
        <svg viewBox="0 0 12 8" className="h-2 w-3 fill-none stroke-white" strokeWidth="1.300" aria-hidden="true"><path d="m.5 7 5.500-5.500L11.500 7" /></svg>
      </button>
      <button type="button" aria-label="Meet Now" className="flex w-6 items-center justify-center">
        <svg viewBox="0 0 12 16" className="h-4 w-3 fill-none stroke-white" strokeWidth="1.200" aria-hidden="true"><rect x="1.500" y="4.500" width="6.500" height="7.500" rx="1.500" /><path d="m8 7.500 3-1.500v5L8 9.500M2 2.300c2-1.800 5-1.800 7 0M2 14c2 1.800 5 1.800 7 0" /></svg>
      </button>
      <button type="button" aria-label="Network" className="flex w-6 items-center justify-center">
        <svg viewBox="0 0 16 14" className="h-[14px] w-4 fill-none stroke-white" aria-hidden="true"><path d="M5.500 2.500h10v7h-11v-2M.5.500h4v3h-4zM2.500 3.500v9h3M9.500 9.500v3M6 12.500h7" /></svg>
      </button>
      <button type="button" aria-label="Volume" className="flex w-6 items-center justify-center">
        <svg viewBox="0 0 17 14" className="h-[14px] w-[17px] fill-none stroke-white" aria-hidden="true"><path d="M.5 5H3l3-3v10L3 9H.5zM8 5c1 1.200 1 2.800 0 4M10.500 3c2.200 2.200 2.200 5.800 0 8M13 1c3.500 3.300 3.500 8.700 0 12" /></svg>
      </button>
      <div className="flex w-16 flex-col justify-center text-center text-[11px] leading-[18px]">
        <span>12:12 AM</span>
        <span>1/25/2025</span>
      </div>
      <button type="button" aria-label="Notifications" className="flex w-10 items-center justify-center">
        <svg viewBox="0 0 17 16" className="h-4 w-[17px] fill-none stroke-white" strokeWidth="1.200" aria-hidden="true"><path d="M1 1h15v11h-5l-2.500 2.500L6 12H1z" /></svg>
      </button>
      <span className="ml-2 w-px bg-[#5a6472]" />
    </div>
  </footer>
);

const Watermark = () => (
  <div className="absolute right-[48px] bottom-2 flex items-center gap-1 font-['Liberation_Sans_Narrow','Roboto_Condensed','Roboto',sans-serif] text-[38px] leading-none text-[#8db4ea]/80" aria-label="ANY RUN">
    <span>ANY</span>
    <svg viewBox="0 0 56 62" className="h-[62px] w-14 fill-none stroke-current" strokeWidth="3.500" strokeLinejoin="round" aria-hidden="true">
      <path d="M8 8H4a2 2 0 0 0-2 2v42a3 3 0 0 0 4.500 2.500l5.500-3V4c0-2 2-3 4-2l36 21c3 2 2 5-1 4L17 9" />
      <path d="M8 8v46M17 9v36l32-17" />
      <path d="m12 51 37-20c4 0 5 3 2 5L16 59c-2 1-4 0-4-2z" />
    </svg>
    <span>RUN</span>
  </div>
);

export default function App() {
  return (
    <div className="flex h-screen flex-col overflow-hidden font-['Noto_Sans',sans-serif]">
      <main className="relative min-h-0 flex-1 overflow-hidden bg-[linear-gradient(97deg,#00a6fb_0%,#00b3ff_22%,#00a2f3_42%,#0074dc_62%,#0047c4_82%,#0038b4_100%)]">
        <div className="flex">
          {desktopItems.map((col, i) => (
            <ul key={i} className="flex w-[75px] shrink-0 flex-col">
              {col.map((it) => (
                <li key={it.label} className="flex h-[108px] flex-col items-start pt-[6px]">
                  <a href="#" className={`flex w-[74px] flex-col items-center pt-px pb-px text-center text-[11px] leading-[15px] text-white [text-shadow:0_1px_2px_rgb(0_60_120/0.600)] ${it.selected ? "bg-white/10 outline outline-white/30" : ""}`}>
                    {it.icon}
                    <span className="mt-[3px]">{it.label}</span>
                  </a>
                </li>
              ))}
            </ul>
          ))}
        </div>
        <Archive />
        <Watermark />
        <Explorer />
      </main>
      <Taskbar />
    </div>
  );
}
